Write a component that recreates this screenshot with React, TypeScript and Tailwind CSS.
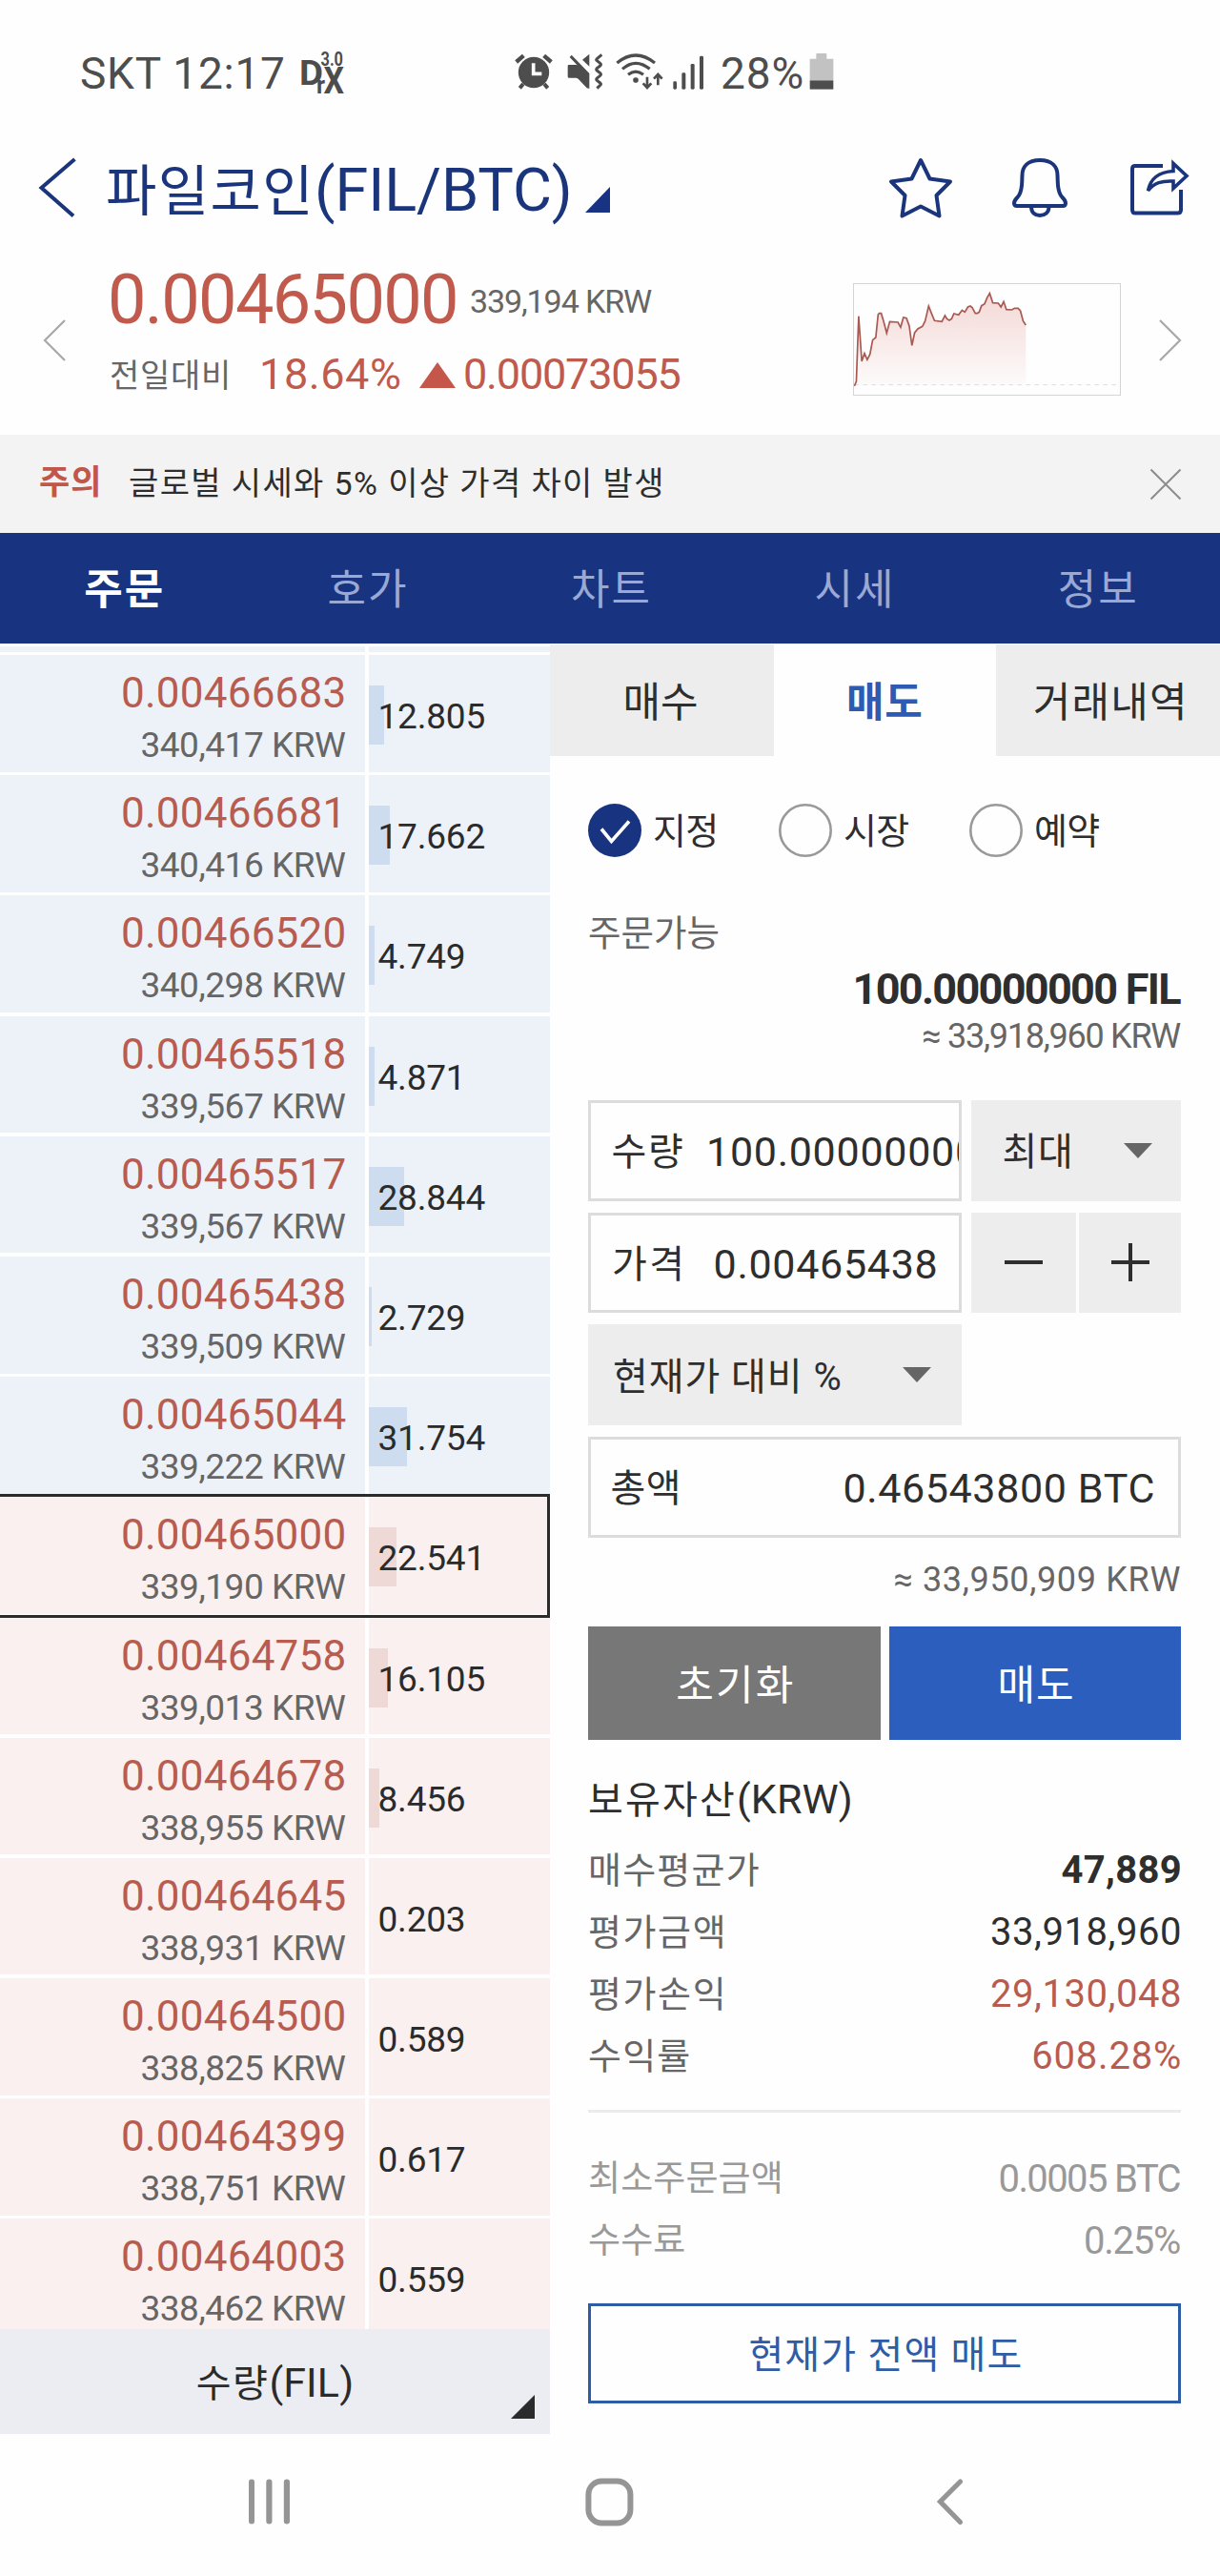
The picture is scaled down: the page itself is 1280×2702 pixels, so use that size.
import React from "react";

type Order = { price: string; krw: string; qty: string; side: "ask" | "bid"; current?: boolean };

const orders: Order[] = [
  { price: "0.00466683", krw: "340,417 KRW", qty: "12.805", side: "ask" },
  { price: "0.00466681", krw: "340,416 KRW", qty: "17.662", side: "ask" },
  { price: "0.00466520", krw: "340,298 KRW", qty: "4.749", side: "ask" },
  { price: "0.00465518", krw: "339,567 KRW", qty: "4.871", side: "ask" },
  { price: "0.00465517", krw: "339,567 KRW", qty: "28.844", side: "ask" },
  { price: "0.00465438", krw: "339,509 KRW", qty: "2.729", side: "ask" },
  { price: "0.00465044", krw: "339,222 KRW", qty: "31.754", side: "ask" },
  { price: "0.00465000", krw: "339,190 KRW", qty: "22.541", side: "bid", current: true },
  { price: "0.00464758", krw: "339,013 KRW", qty: "16.105", side: "bid" },
  { price: "0.00464678", krw: "338,955 KRW", qty: "8.456", side: "bid" },
  { price: "0.00464645", krw: "338,931 KRW", qty: "0.203", side: "bid" },
  { price: "0.00464500", krw: "338,825 KRW", qty: "0.589", side: "bid" },
  { price: "0.00464399", krw: "338,751 KRW", qty: "0.617", side: "bid" },
  { price: "0.00464003", krw: "338,462 KRW", qty: "0.559", side: "bid" },
];

function StatusBar() {
  return (
    <div className="flex h-[154px] items-center pl-[84px] text-[46px] leading-[60px] text-[#4d4d4d]">
      <span className="w-[230px] tracking-[0.78px]">SKT 12:17</span>
      <svg className="mb-[2px] h-[48px] w-[48px] overflow-visible" viewBox="314 52 48 48" fill="#4d4d4d" fontFamily="Roboto, sans-serif">
        <text x="314" y="89" fontSize="37" fontWeight="700" textLength="25" lengthAdjust="spacingAndGlyphs">D</text>
        <text x="332" y="98" fontSize="26" fontWeight="700" textLength="9" lengthAdjust="spacingAndGlyphs">r</text>
        <text x="339.500" y="98" fontSize="38" fontWeight="700" textLength="21.500" lengthAdjust="spacingAndGlyphs">X</text>
        <text x="336.500" y="68.500" fontSize="21" fontWeight="700" textLength="23.500" lengthAdjust="spacingAndGlyphs">3.0</text>
      </svg>
      <div className="mb-[4px] ml-[178px] flex h-[40px]">
        <svg className="h-[40px] w-[40px]" viewBox="120 75 120 120">
          <circle cx="180" cy="138" r="48.500" fill="#4d4d4d" />
          <path d="M125 105L148 85M212 85L235 105" stroke="#4d4d4d" strokeWidth="13" fill="none" />
          <path d="M147 174L136 187M213 174L224 187" stroke="#4d4d4d" strokeWidth="12" fill="none" />
          <path d="M179 109V142H205" stroke="#fefefe" strokeWidth="11" fill="none" />
        </svg>
        <svg className="ml-[14px] h-[40px] w-[40px]" viewBox="282 75 120 120">
          <path d="M290 114H315L318 116L293 90L299 83L355 141V189L347 187L320 158Q317 155 312 155H290Q287 155 287 151V118Q287 114 290 114Z" fill="#4d4d4d" />
          <path d="M355 80V119L333 98Z" fill="#4d4d4d" />
          <path d="M393 82L378 95Q374 98 378 101L388 109Q393 113 388 117L378 125Q374 129 378 132L388 140Q393 144 388 148L378 156Q374 160 378 163L388 171Q393 175 388 178L378 188" transform="translate(1 0)" stroke="#4d4d4d" strokeWidth="9" fill="none" />
        </svg>
        <svg className="ml-[11px] h-[40px] w-[51px]" viewBox="437 75 153 120" fill="none" stroke="#4d4d4d">
          <path d="M444 108Q503 60 563 108M461 127Q503 91 547 127M479 145Q503 126 527 145" strokeWidth="9.500" />
          <circle cx="503" cy="162" r="8.500" fill="#4d4d4d" stroke="none" />
          <path d="M539 152V186M526 172L539 186L552 172M573 178V145M560 158L573 144L586 158" strokeWidth="8" />
        </svg>
        <svg className="ml-[9px] h-[40px] w-[34px]" viewBox="617 75 102 120" fill="#4d4d4d">
          <rect x="621" y="166" width="11" height="25" rx="4" />
          <rect x="648" y="139" width="12" height="52" rx="4" />
          <rect x="676" y="111" width="12" height="80" rx="4" />
          <rect x="704" y="86" width="12" height="105" rx="4" />
        </svg>
      </div>
      <span className="ml-[17px] w-[93px] tracking-[0.9px]">28%</span>
      <svg className="mb-[4px] h-[40px] w-[26px]" viewBox="1048 75 78 120">
        <path d="M1070 80Q1070 78 1072 78H1101Q1103 78 1103 80V95H1124V163H1050V95H1070Z" fill="#c2c2c2" />
        <path d="M1050 163H1124V191H1050Z" fill="#4d4d4d" />
      </svg>
    </div>
  );
}

function Header() {
  return (
    <div className="flex h-[90px] items-start text-[#1a357c]">
      <svg className="ml-[38px] mt-[6px] h-[72px] w-[46px]" viewBox="38 160 46 72" fill="none" stroke="#1a357c" strokeWidth="4">
        <path d="M78.400 167L43.500 197L77 226.500" />
      </svg>
      <div className="ml-[27px] mt-px w-[503px] whitespace-nowrap text-[63px] leading-[90px] tracking-[-0.1px]">
        <span className="text-[58px] tracking-[1.4px]">파일코인</span>
        <span>(FIL/BTC)</span>
      </div>
      <svg className="mt-[42px] h-[27px] w-[27px]" viewBox="0 0 27 27">
        <path d="M0 27L26 0V27Z" fill="#183382" />
      </svg>
      <svg className="ml-[289px] mt-[8px] h-[72px] w-[72px]" viewBox="930 162 72 72" fill="none" stroke="#1a357c" strokeWidth="4" strokeLinejoin="round">
        <path d="M966 168L975.500 187.500L997 190.500L982.500 205L985.500 226.500L966 216.500L946.500 226.500L949.500 205L935 190.500L956.500 187.500Z" />
      </svg>
      <svg className="ml-[56px] mt-[8px] h-[72px] w-[66px]" viewBox="1058 162 66 72" fill="none" stroke="#1a357c" strokeWidth="4" strokeLinejoin="round">
        <path d="M1091 168C1078 168 1072.500 175 1072.500 184C1072 192 1073 199 1069 205C1067 208 1064 210 1064 213C1064 215 1065 216 1067 216H1115C1117 216 1118 215 1118 213C1118 210 1115 208 1113 205C1109 199 1110 192 1109.500 184C1109.500 175 1104 168 1091 168Z" />
        <path d="M1082 217C1082 223 1086 226 1091 226S1100.500 223 1100.500 217" />
      </svg>
      <svg className="ml-[58px] mt-[8px] h-[72px] w-[70px]" viewBox="1182 162 70 72" fill="none" stroke="#1a357c" strokeWidth="4">
        <path d="M1220 174H1191Q1188 174 1188 177V220Q1188 223.500 1191 223.500H1235.500Q1239 223.500 1239 220V199" />
        <path d="M1231 171.500V179.500C1214 180.500 1207 188 1204.500 200C1211 191.500 1219 189.500 1231 190V197.500L1245 184.500Z" strokeWidth="3.600" />
      </svg>
    </div>
  );
}

const trend =
  "628,825 633,810 639,605 647,747 654,722 661,742 668,725 675,680 683,672 689,600 692,596 697,596 703,620 711,658 719,622 740,624 747,640 754,609 762,611 769,635 776,697 783,657 791,645 803,637 810,620 819,573 826,595 834,619 853,622 861,603 866,613 872,618 878,613 884,597 896,601 905,586 912,592 920,576 926,573 931,578 939,596 944,596 949,592 955,572 963,566 969,548 976,533 984,563 998,564 1005,576 1012,559 1019,584 1033,585 1040,580 1049,580 1055,588 1062,620 1069,633";

function PriceSummary() {
  return (
    <div className="flex h-[212px] items-start">
      <svg className="ml-[44px] mt-[90px] h-[46px] w-[26px]" viewBox="0 0 26 46" fill="none" stroke="#a8a8a8" strokeWidth="2.200">
        <path d="M24 2L3 23L24 44" />
      </svg>
      <div className="ml-[43px] w-[782px] pt-[31px]">
        <div className="flex h-[80px] leading-[80px]">
          <span className="w-[380px] text-[72px] tracking-[-1.62px] text-[#bf5a4c]">0.00465000</span>
          <span className="mt-px text-[34px] tracking-[-1.1px] text-[#666]">339,194 KRW</span>
        </div>
        <div className="mt-[8px] flex h-[60px] leading-[60px]">
          <span className="ml-[2px] mt-px w-[157px] text-[34px] tracking-[0.7px] text-[#666]">전일대비</span>
          <span className="w-[168px] text-[45px] tracking-[0.59px] text-[#bf5a4c]">18.64%</span>
          <svg className="mt-[17px] h-[27px] w-[38px]" viewBox="0 0 38 27">
            <path d="M19 0L38 27H0Z" fill="#c4574a" />
          </svg>
          <span className="ml-[8px] text-[45px] tracking-[-1.19px] text-[#bf5a4c]">0.00073055</span>
        </div>
      </div>
      <div className="mt-[53px] h-[118px] w-[281px] border border-[#d4d4d4]">
        <svg className="block h-full w-full" viewBox="627 504 684 348" preserveAspectRatio="none">
          <defs>
            <linearGradient id="fade" x1="0" y1="0" x2="0" y2="1">
              <stop offset="0" stopColor="#f3d8d5" />
              <stop offset="1" stopColor="#fdfbfb" />
            </linearGradient>
          </defs>
          <polygon points={trend + " 1069,821 628,821"} fill="url(#fade)" />
          <path d="M628 821H1311" stroke="#dcdcdc" strokeWidth="1" strokeDasharray="4.500 4.500" vectorEffect="non-scaling-stroke" />
          <polyline points={trend} fill="none" stroke="#a85a52" strokeWidth="1.700" vectorEffect="non-scaling-stroke" />
        </svg>
      </div>
      <svg className="ml-[39px] mt-[90px] h-[46px] w-[26px]" viewBox="0 0 26 46" fill="none" stroke="#a8a8a8" strokeWidth="2.200">
        <path d="M2 2L23 23L2 44" />
      </svg>
    </div>
  );
}

function Notice() {
  return (
    <div className="flex h-[103px] items-center bg-[#f3f3f3]">
      <span className="ml-[41px] w-[94px] text-[35px] font-bold tracking-[1px] text-[#c0574a]">주의</span>
      <span className="flex-1 text-[34px] tracking-[1.38px] text-[#2e2e2e]">글로벌 시세와 5% 이상 가격 차이 발생</span>
      <svg className="mr-[40px] h-[34px] w-[34px]" viewBox="0 0 34 34" stroke="#8c8c8c" strokeWidth="2">
        <path d="M1.500 1.500L32.500 32.500M32.500 1.500L1.500 32.500" />
      </svg>
    </div>
  );
}

function NavTabs() {
  return (
    <div className="grid h-[116px] grid-cols-5 items-center bg-[#183380] pl-[3px] pt-[4px] text-center text-[44px] tracking-[2px] text-[#9aa9d4]">
      <span className="font-bold text-white">주문</span>
      <span>호가</span>
      <span>차트</span>
      <span>시세</span>
      <span>정보</span>
    </div>
  );
}

function OrderRow({ price, krw, qty, side, current }: Order) {
  const cell = side === "ask" ? "bg-[#edf2f9]" : "bg-[#f9f0ef]";
  const bar = side === "ask" ? "bg-[#cddcee]" : "bg-[#eed9d7]";
  const amount = parseFloat(qty);
  return (
    <div className="relative flex h-[126.2px] gap-[4px] pb-[3.6px]">
      <div className={`${cell} w-[383px] pt-[12px] text-right`}>
        <div className="pr-[19.500px] text-[44px] leading-[56px] tracking-[0.23px] text-[#b85c50]">{price}</div>
        <div className="mt-[5px] pr-[20.500px] text-[37px] leading-[44px] tracking-[-0.45px] text-[#666]">{krw}</div>
      </div>
      <div className={`${cell} relative flex-1`}>
        {amount > 1 && <div className={`${bar} absolute left-0 top-[32px] h-[62px]`} style={{ width: amount * 1.27 }} />}
        <div className="relative pl-[9.500px] pt-[8px] text-[37px] leading-[114px] tracking-[-0.2px] text-[#2b2b2b]">{qty}</div>
      </div>
      {current && <div className="absolute inset-x-0 -top-[3.500px] z-10 h-[130px] border-y-[3px] border-r-[3px] border-[#2b2b2b]" />}
    </div>
  );
}

function OrderBook() {
  return (
    <div className="flex w-[577px] flex-col">
      <div className="h-[1768px] overflow-hidden pt-[3px]">
        <div className="flex h-[9px] gap-[4px] pb-[3.5px]">
          <div className="w-[383px] bg-[#edf2f7]" />
          <div className="flex-1 bg-[#edf2f7]" />
        </div>
        {orders.map((o) => (
          <OrderRow key={o.price} {...o} />
        ))}
      </div>
      <div className="relative h-[110px] bg-[#ecedf3] text-center text-[43px] leading-[112px] tracking-[0.1px] text-[#2b2b2b]">
        <span className="text-[40px] tracking-[1.5px]">수량</span>
        <span>(FIL)</span>
        <svg className="absolute bottom-[16px] right-[16px] h-[25px] w-[25px]" viewBox="0 0 25 25">
          <path d="M0 25L25 0V25Z" fill="#2b2b2b" />
        </svg>
      </div>
    </div>
  );
}

function Radio({ label, checked }: { label: string; checked?: boolean }) {
  return (
    <div className="flex h-[56px] w-[200px] items-center">
      <svg className="h-[56px] w-[56px]" viewBox="0 0 56 56" fill="none">
        {checked ? (
          <>
            <circle cx="28" cy="28" r="28" fill="#183380" />
            <path d="M14 26.500L24.500 39.500L43 18.500" stroke="#fff" strokeWidth="3.600" />
          </>
        ) : (
          <circle cx="28" cy="28" r="26.700" stroke="#999" strokeWidth="2.600" />
        )}
      </svg>
      <span className="ml-[12px] mt-[3px] text-[38px] tracking-[-0.8px] text-[#2e2e2e]">{label}</span>
    </div>
  );
}

function Caret() {
  return (
    <svg className="h-[16px] w-[30px]" viewBox="0 0 30 16">
      <path d="M0 0H30L15 16Z" fill="#666" />
    </svg>
  );
}

function InfoRow({ label, labelClass, value, valueClass }: { label: string; labelClass: string; value: string; valueClass: string }) {
  return (
    <div className="flex h-[64.9px] items-center justify-between leading-[60px]">
      <span className={labelClass}>{label}</span>
      <span className={valueClass}>{value}</span>
    </div>
  );
}

function OrderForm() {
  const field = "flex h-[105.5px] items-center border-[3.5px] border-[#dcdcdc] pt-[3px] text-[#2e2e2e]";
  return (
    <div className="flex w-[703px] flex-col pt-px">
      <div className="flex h-[117px] text-[43px] leading-[123px] text-[#2e2e2e]">
        <div className="w-[235px] bg-[#ededed] pr-[3px] text-center">매수</div>
        <div className="w-[232.500px] text-center font-bold tracking-[0.8px] text-[#2d5bb4]">매도</div>
        <div className="flex-1 bg-[#ededed] pl-[6px] text-center tracking-[1.2px]">거래내역</div>
      </div>
      <div className="pl-[40px] pr-[41px]">
        <div className="mt-[50px] flex h-[56px]">
          <Radio label="지정" checked />
          <Radio label="시장" />
          <Radio label="예약" />
        </div>
        <div className="mt-[60px] text-[37.5px] leading-[40px] text-[#666]">주문가능</div>
        <div className="mt-[9px] pr-px text-right text-[45px] font-bold leading-[59px] tracking-[-1.69px] text-[#2e2e2e]">100.00000000 FIL</div>
        <div className="pr-px text-right text-[36px] leading-[40px] tracking-[-1.26px] text-[#666]">≈ 33,918,960 KRW</div>

        <div className="mt-[47px] flex flex-col gap-[12.2px]">
          <div className="flex gap-[10px]">
            <div className={`${field} w-[392px] overflow-hidden whitespace-nowrap pl-[21.5px]`}>
              <span className="w-[99.5px] shrink-0 pt-[2px] text-[40px] tracking-[1.8px]">수량</span>
              <span className="text-[43px] tracking-[0.72px]">100.00000000</span>
            </div>
            <div className="flex flex-1 items-center justify-between bg-[#ededed] pl-[32.500px] pr-[30px] text-[40px] text-[#2e2e2e]">
              <span className="pt-[5px] tracking-[0.7px]">최대</span>
              <Caret />
            </div>
          </div>
          <div className="flex gap-[10px]">
            <div className={`${field} w-[392px] justify-between pl-[22px] pr-[21.5px]`}>
              <span className="pt-[2px] text-[40px] tracking-[2.5px]">가격</span>
              <span className="text-[43px] tracking-[0.71px]">0.00465438</span>
            </div>
            <div className="flex flex-1 gap-[3.5px]">
              <div className="flex w-[109.500px] items-center justify-center bg-[#ededed]">
                <svg className="h-[42px] w-[42px]" viewBox="0 0 42 42" stroke="#2e2e2e" strokeWidth="4">
                  <path d="M1 21H41" />
                </svg>
              </div>
              <div className="flex flex-1 items-center justify-center bg-[#ededed]">
                <svg className="h-[42px] w-[42px]" viewBox="0 0 42 42" stroke="#2e2e2e" strokeWidth="4">
                  <path d="M1 21H41M21 1V41" />
                </svg>
              </div>
            </div>
          </div>
          <div className="flex h-[105.5px] w-[392px] items-center justify-between bg-[#ededed] pl-[26px] pr-[32px] text-[#2e2e2e]">
            <span className="pt-[5px] text-[40px] tracking-[0.95px]">현재가 대비 %</span>
            <Caret />
          </div>
          <div className={`${field} justify-between pl-[20.500px] pr-[24px]`}>
            <span className="pt-[2px] text-[40px] tracking-[0.4px]">총액</span>
            <span className="text-[43px] tracking-[0.63px]">0.46543800 BTC</span>
          </div>
        </div>

        <div className="mt-[24px] text-right text-[36px] leading-[40px] tracking-[0.67px] text-[#666]">≈ 33,950,909 KRW</div>

        <div className="mt-[29.5px] flex h-[118.5px] gap-[9.5px] text-center text-[43px] leading-[124px] text-white">
          <div className="flex-1 bg-[#777] pl-[3px] tracking-[2.2px]">초기화</div>
          <div className="flex-1 bg-[#2c5ebd] pl-[2px] tracking-[1px]">매도</div>
        </div>

        <div className="mt-[32px] text-[43px] leading-[60px] tracking-[0.13px] text-[#2e2e2e]">
          <span className="text-[40px] tracking-[2.2px]">보유자산</span>
          <span>(KRW)</span>
        </div>
        <div className="mt-[11px]">
          <InfoRow label="매수평균가" labelClass="text-[38px] tracking-[1.2px] text-[#666]" value="47,889" valueClass="-mr-px text-[40px] font-bold tracking-[0.33px] text-[#2e2e2e]" />
          <InfoRow label="평가금액" labelClass="text-[38px] tracking-[1.6px] text-[#666]" value="33,918,960" valueClass="-mr-px text-[40px] tracking-[0.55px] text-[#2e2e2e]" />
          <InfoRow label="평가손익" labelClass="text-[38px] tracking-[1.6px] text-[#666]" value="29,130,048" valueClass="-mr-px text-[40px] tracking-[0.55px] text-[#b85c50]" />
          <InfoRow label="수익률" labelClass="text-[38px] tracking-[1.2px] text-[#666]" value="608.28%" valueClass="-mr-px text-[40px] tracking-[0.78px] text-[#b85c50]" />
        </div>
        <div className="mt-[23.5px] h-[3.5px] bg-[#ebebeb]" />
        <div className="mt-[37.5px]">
          <InfoRow label="최소주문금액" labelClass="text-[37px] tracking-[0.1px] text-[#999]" value="0.0005 BTC" valueClass="mr-px text-[40px] tracking-[-1.62px] text-[#999]" />
          <InfoRow label="수수료" labelClass="text-[37px] tracking-[0.1px] text-[#999]" value="0.25%" valueClass="mr-px text-[40px] tracking-[-1.25px] text-[#999]" />
        </div>
        <div className="mt-[32.5px] h-[105.5px] border-[3.5px] border-[#2f5da5] pl-[3px] text-center text-[40px] leading-[104px] tracking-[1.2px] text-[#2f5da5]">현재가 전액 매도</div>
      </div>
    </div>
  );
}

function SystemNav() {
  return (
    <div className="flex h-[149px] items-center pb-[7px]">
      <svg className="ml-[260px] h-[54px] w-[46px]" viewBox="0 0 46 54" fill="#959595">
        <rect x="1" y="3.500" width="6" height="47" rx="3" />
        <rect x="19.300" y="3.500" width="6.200" height="47" rx="3" />
        <rect x="37.800" y="3.500" width="6.200" height="47" rx="3" />
      </svg>
      <svg className="ml-[306px] h-[54px] w-[54px]" viewBox="0 0 54 54" fill="none">
        <rect x="5.400" y="5.400" width="44" height="44" rx="14" stroke="#959595" strokeWidth="6" />
      </svg>
      <svg className="ml-[315px] h-[54px] w-[32px]" viewBox="982 2597 32 54" fill="none" stroke="#959595" strokeWidth="5.200" strokeLinecap="round">
        <path d="M1008.500 2603L987.500 2624L1008.500 2645.500" />
      </svg>
    </div>
  );
}

export default function App() {
  return (
    <div className="flex h-[2702px] w-[1280px] flex-col overflow-hidden bg-[#fefefe] font-[Roboto,'Noto_Sans_CJK_KR',sans-serif]">
      <StatusBar />
      <Header />
      <PriceSummary />
      <Notice />
      <NavTabs />
      <div className="flex h-[1878px]">
        <OrderBook />
        <OrderForm />
      </div>
      <SystemNav />
    </div>
  );
}
